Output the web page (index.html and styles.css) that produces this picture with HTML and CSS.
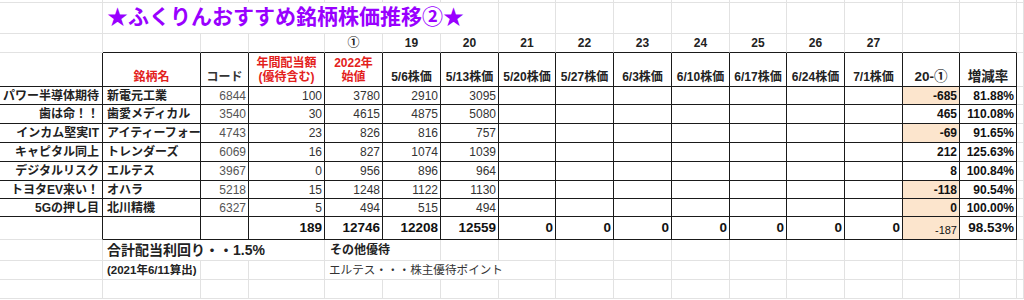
FILE: index.html
```html
<!DOCTYPE html>
<html lang="ja">
<head>
<meta charset="utf-8">
<title>ふくりんおすすめ銘柄株価推移②</title>
<link rel="stylesheet" href="styles.css">
</head>
<body>
<div class="sheet">
  <div class="row top">
    <div></div><div></div><div></div><div></div><div></div><div></div><div></div><div></div><div></div><div></div><div></div><div></div><div></div><div></div><div></div><div></div><div></div>
  </div>
  <div class="row title-row">
    <div></div>
    <div class="title span6">★ふくりんおすすめ銘柄株価推移②★</div>
    <div></div><div></div><div></div><div></div><div></div><div></div><div></div><div></div><div></div>
    <div></div>
  </div>
  <div class="row nums">
    <div></div><div></div><div></div><div></div>
    <div>①</div><div>19</div><div>20</div><div>21</div><div>22</div><div>23</div><div>24</div><div>25</div><div>26</div><div>27</div>
    <div></div><div></div><div></div>
  </div>
  <div class="row tbl head">
    <div></div>
    <div class="red">銘柄名</div>
    <div class="gray">コード</div>
    <div class="red">年間配当額<br>(優待含む)</div>
    <div class="red">2022年<br>始値</div>
    <div>5/6株価</div><div>5/13株価</div><div>5/20株価</div><div>5/27株価</div><div>6/3株価</div><div>6/10株価</div><div>6/17株価</div><div>6/24株価</div><div>7/1株価</div>
    <div class="big">20-①</div>
    <div class="big">増減率</div>
    <div></div>
  </div>
  <div class="row tbl data">
    <div>パワー半導体期待</div><div>新電元工業</div><div class="code">6844</div><div>100</div><div>3780</div><div>2910</div><div>3095</div>
    <div></div><div></div><div></div><div></div><div></div><div></div><div></div>
    <div class="diff neg">-685</div><div class="rate">81.88%</div><div></div>
  </div>
  <div class="row tbl data">
    <div>歯は命！！</div><div>歯愛メディカル</div><div class="code">3540</div><div>30</div><div>4615</div><div>4875</div><div>5080</div>
    <div></div><div></div><div></div><div></div><div></div><div></div><div></div>
    <div class="diff">465</div><div class="rate">110.08%</div><div></div>
  </div>
  <div class="row tbl data">
    <div>インカム堅実IT</div><div>アイティーフォー</div><div class="code">4743</div><div>23</div><div>826</div><div>816</div><div>757</div>
    <div></div><div></div><div></div><div></div><div></div><div></div><div></div>
    <div class="diff neg">-69</div><div class="rate">91.65%</div><div></div>
  </div>
  <div class="row tbl data">
    <div>キャピタル同上</div><div>トレンダーズ</div><div class="code">6069</div><div>16</div><div>827</div><div>1074</div><div>1039</div>
    <div></div><div></div><div></div><div></div><div></div><div></div><div></div>
    <div class="diff">212</div><div class="rate">125.63%</div><div></div>
  </div>
  <div class="row tbl data">
    <div>デジタルリスク</div><div>エルテス</div><div class="code">3967</div><div>0</div><div>956</div><div>896</div><div>964</div>
    <div></div><div></div><div></div><div></div><div></div><div></div><div></div>
    <div class="diff">8</div><div class="rate">100.84%</div><div></div>
  </div>
  <div class="row tbl data">
    <div>トヨタEV来い！</div><div>オハラ</div><div class="code">5218</div><div>15</div><div>1248</div><div>1122</div><div>1130</div>
    <div></div><div></div><div></div><div></div><div></div><div></div><div></div>
    <div class="diff neg">-118</div><div class="rate">90.54%</div><div></div>
  </div>
  <div class="row tbl data">
    <div>5Gの押し目</div><div>北川精機</div><div class="code">6327</div><div>5</div><div>494</div><div>515</div><div>494</div>
    <div></div><div></div><div></div><div></div><div></div><div></div><div></div>
    <div class="diff neg">0</div><div class="rate">100.00%</div><div></div>
  </div>
  <div class="row tbl total">
    <div></div><div></div><div></div>
    <div>189</div><div>12746</div><div>12208</div><div>12559</div>
    <div>0</div><div>0</div><div>0</div><div>0</div><div>0</div><div>0</div><div>0</div>
    <div class="neg small">-187</div><div>98.53%</div><div></div>
  </div>
  <div class="row notes">
    <div></div>
    <div class="yield span3">合計配当利回り・・1.5%</div>
    <div class="other span2">その他優待</div>
    <div></div><div></div><div></div><div></div><div></div><div></div><div></div><div></div><div></div><div></div>
    <div></div>
  </div>
  <div class="row notes">
    <div></div>
    <div class="calc">(2021年6/11算出)</div>
    <div></div><div></div>
    <div class="benefit span4">エルテス・・・株主優待ポイント</div>
    <div></div><div></div><div></div><div></div><div></div><div></div><div></div><div></div>
    <div></div>
  </div>
  <div class="row">
    <div></div><div></div><div></div><div></div><div></div><div></div><div></div><div></div><div></div><div></div><div></div><div></div><div></div><div></div><div></div><div></div><div></div>
  </div>
</div>
</body>
</html>
```

FILE: styles.css
```css
* {
  box-sizing: border-box;
}

body {
  margin: 0;
  background: #fff;
  font-family: "Liberation Sans", "Noto Sans CJK JP", sans-serif;
  font-size: 12px;
  color: #222;
}

.sheet {
  display: grid;
  width: 1024px;
  height: 300px;
  overflow: hidden;
  grid-template-columns: 103px 98px 48px 76px 58px 58px 58px 57px 58px 58px 58px 57px 58px 58px 57px 57px 7px;
  grid-template-rows: 3px 31px 19px 34px 18px 19px 19px 19px 19px 18px 18px 23px 21px 19px 19px 1px;
}

.row {
  display: contents;
}

.row > div {
  display: flex;
  align-items: center;
  min-width: 0;
  padding: 0 3px;
  white-space: nowrap;
  overflow: hidden;
  line-height: 14px;
  border-right: 1px solid #e2e2e2;
  border-bottom: 1px solid #e2e2e2;
}

.span2 { grid-column: span 2; }
.span3 { grid-column: span 3; }
.span4 { grid-column: span 4; }
.span6 { grid-column: span 6; }

/* title */
.title-row .title {
  font-size: 21px;
  font-weight: 700;
  color: #9900ff;
  padding-left: 4px;
  overflow: visible;
  line-height: 24px;
  padding-bottom: 2px;
}

/* number row */
.nums > div {
  justify-content: center;
  font-weight: 700;
  color: #222;
}

.nums > div:nth-child(n+2):nth-child(-n+16) {
  border-bottom-color: #1a1a1a;
}

/* table borders */
.tbl > div:not(:last-child) {
  border-right-color: #1a1a1a;
  border-bottom-color: #1a1a1a;
}

.total > div:first-child {
  border-bottom-color: #e2e2e2;
}

/* header */
.head > div {
  align-items: flex-end;
  justify-content: center;
  text-align: center;
  font-weight: 700;
  padding-bottom: 2px;
  color: #222;
}

.head .red { color: #e3211c; }
.head .gray { color: #333; }
.head .big { font-size: 13.5px; padding-bottom: 2px; }

/* data rows */
.data > div {
  justify-content: flex-end;
  color: #333;
  padding-right: 2px;
}

.data > div:nth-child(1) {
  font-weight: 700;
  color: #222;
  padding-right: 3px;
}

.data > div:nth-child(2) {
  justify-content: flex-start;
  font-weight: 700;
  color: #222;
  padding-left: 4px;
  padding-right: 0;
}

.data .code { color: #555; }

.data .diff,
.data .rate {
  font-weight: 700;
  color: #111;
}

.neg { background: #fce5cd; }

/* totals */
.total > div {
  justify-content: flex-end;
  font-weight: 700;
  font-size: 13.5px;
  color: #111;
  padding-right: 2px;
}

.total .small {
  font-size: 11px;
  font-weight: 400;
  padding-top: 3px;
}

/* notes */
.notes > div {
  align-items: center;
}

.notes .yield {
  font-size: 14px;
  font-weight: 700;
  color: #222;
  padding-left: 4px;
}

.notes .other {
  font-weight: 700;
  color: #222;
  padding-left: 5px;
}

.notes .calc {
  font-size: 11.5px;
  font-weight: 700;
  color: #222;
  padding-left: 4px;
}

.notes .benefit {
  color: #333;
  padding-left: 4px;
  font-size: 11.6px;
}
```
